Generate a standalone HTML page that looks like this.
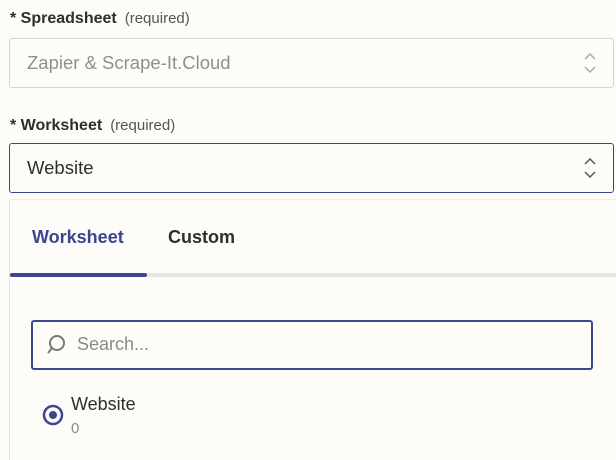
<!DOCTYPE html>
<html><head><style>
body{margin:0;width:616px;height:447px;background:#fdfcf9;font-family:"Liberation Sans",sans-serif;position:relative;overflow:hidden;color:#2d2e2e}
.a{position:absolute}
.lbl{font-size:16px;font-weight:bold;color:#2d2e2e}
.lbl span{font-weight:normal;color:#555;font-size:15px;margin-left:8px}
.box{position:absolute;left:9px;height:46px;border:1px solid #d5d3ce;border-radius:3px;background:#fdfcf9;font-size:18.5px;padding-left:17px;box-sizing:border-box;width:605px}
</style></head><body>
<div class="a lbl" style="left:10px;top:10px">* Spreadsheet<span>(required)</span></div>
<div class="box" style="top:38px;height:50px;line-height:48px;color:#8f8f8f">Zapier &amp; Scrape-It.Cloud</div>
<svg class="a" style="left:583px;top:51px" width="14" height="24" viewBox="0 0 14 24"><path d="M2 8 L7 3 L12 8 M2 16 L7 21 L12 16" fill="none" stroke="#aaa" stroke-width="1.5"/></svg>
<div class="a lbl" style="left:10px;top:117px">* Worksheet<span>(required)</span></div>
<div class="box" style="top:143px;height:50px;line-height:48px;border-color:#3d4592;color:#2d2e2e">Website</div>
<svg class="a" style="left:583px;top:156px" width="14" height="24" viewBox="0 0 14 24"><path d="M2 8 L7 3 L12 8 M2 16 L7 21 L12 16" fill="none" stroke="#555" stroke-width="1.5"/></svg>
<div class="a" style="left:9px;top:199px;width:620px;height:260px;border-left:1px solid #e0ded9;border-top:1px solid #eee;background:#fdfcf9"></div>
<div class="a" style="left:32px;top:227px;font-size:18px;font-weight:bold;color:#3d4592">Worksheet</div>
<div class="a" style="left:168px;top:227px;font-size:18px;font-weight:bold;color:#2d2e2e">Custom</div>
<div class="a" style="left:10px;top:273px;width:606px;height:4px;background:#e7e5e0"></div>
<div class="a" style="left:10px;top:273px;width:137px;height:4px;background:#3d4592;border-radius:2px"></div>
<div class="a" style="left:31px;top:320px;width:562px;height:50px;border:2px solid #3d4592;border-radius:3px;box-sizing:border-box"></div>
<svg class="a" style="left:44px;top:333px" width="24" height="24" viewBox="0 0 24 24"><circle cx="13" cy="10" r="7" fill="none" stroke="#777" stroke-width="2"/><path d="M8 15 L4 20" stroke="#777" stroke-width="2"/></svg>
<div class="a" style="left:77px;top:334px;font-size:18px;color:#8a8a8a">Search...</div>
<svg class="a" style="left:42px;top:404px" width="22" height="22" viewBox="0 0 22 22"><circle cx="11" cy="11" r="9" fill="none" stroke="#3d4592" stroke-width="2.5"/><circle cx="11" cy="11" r="4" fill="#3d4592"/></svg>
<div class="a" style="left:71px;top:394px;font-size:18px;color:#2d2e2e">Website</div>
<div class="a" style="left:71px;top:420px;font-size:15px;color:#888">0</div>
</body></html>
